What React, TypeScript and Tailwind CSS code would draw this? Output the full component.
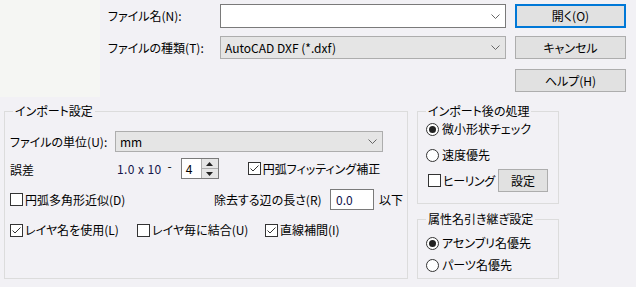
import React from "react";

const font =
  "font-['Noto_Sans_CJK_JP','Noto_Sans_CJK_SC',sans-serif] [font-feature-settings:'palt'] text-[12px] leading-[16px] text-black";

function CheckBox({ checked }: { checked?: boolean }) {
  return (
    <svg width="13" height="13" viewBox="0 0 13 13" className="shrink-0">
      <rect x="0.5" y="0.5" width="12" height="12" fill="#fff" stroke="#333" />
      {checked && (
        <path d="M2.5 6.5 L5 9 L10.5 3.5" fill="none" stroke="#333" strokeWidth="1" />
      )}
    </svg>
  );
}

function Radio({ on }: { on?: boolean }) {
  return (
    <svg width="13" height="13" viewBox="0 0 13 13" className="shrink-0">
      <circle cx="6.5" cy="6.5" r="6" fill="#fff" stroke="#333" />
      {on && <circle cx="6.5" cy="6.5" r="3.5" fill="#222" />}
    </svg>
  );
}

function Chevron() {
  return (
    <svg width="9" height="5" viewBox="0 0 9 5">
      <path d="M0.5 0.5 L4.5 4.5 L8.5 0.5" fill="none" stroke="#666" />
    </svg>
  );
}

function Button({ label, primary }: { label: string; primary?: boolean }) {
  return (
    <div
      className={`flex items-center justify-center bg-[#e1e1e1] ${
        primary ? "border-2 border-[#0078d7]" : "border border-[#adadad]"
      } h-full w-full`}
    >
      {label}
    </div>
  );
}

function GroupBox({
  title,
  className,
  children,
}: {
  title: string;
  className: string;
  children: React.ReactNode;
}) {
  return (
    <div className={`relative border border-[#dcdcdc] ${className}`}>
      <span className="absolute left-[8px] top-[-9px] bg-[#f2f1f5] px-[2px] leading-[16px]">
        {title}
      </span>
      {children}
    </div>
  );
}

export default function App() {
  return (
    <div className={`w-[636px] h-[287px] bg-[#f2f1f5] overflow-hidden ${font}`}>
      {/* top: file selection */}
      <div className="flex h-[97px]">
        <div className="w-[100px] h-[97px] bg-[#f5f6f3]" />
        <div className="flex flex-col pl-[8px] pt-[4px]">
          <div className="flex items-center h-[24px]">
            <span className="w-[112px]">ファイル名(N):</span>
            <div className="w-[286px] h-[24px] bg-white border border-[#7a7a7a] flex items-center justify-end pr-[5px]">
              <Chevron />
            </div>
          </div>
          <div className="flex items-center h-[23px] mt-[8px]">
            <span className="w-[112px]">ファイルの種類(T):</span>
            <div className="w-[286px] h-[23px] bg-[#e5e5e5] border border-[#adadad] flex items-center justify-between pl-[4px] pr-[5px]">
              <span>AutoCAD DXF (*.dxf)</span>
              <Chevron />
            </div>
          </div>
        </div>
        <div className="flex flex-col ml-[9px] pt-[4px] w-[111px]">
          <div className="h-[24px]">
            <Button label="開く(O)" primary />
          </div>
          <div className="h-[23px] mt-[8px]">
            <Button label="キャンセル" />
          </div>
          <div className="h-[23px] mt-[10px]">
            <Button label="ヘルプ(H)" />
          </div>
        </div>
      </div>

      {/* bottom: settings */}
      <div className="flex pl-[4px] mt-[14px]">
        <GroupBox title="インポート設定" className="w-[404px] h-[168px]">
          <div className="flex flex-col pl-[5px] pt-[19px]">
            <div className="flex items-center h-[21px]">
              <span className="w-[105px]">ファイルの単位(U):</span>
              <div className="w-[268px] h-[21px] bg-[#e5e5e5] border border-[#adadad] flex items-center justify-between pl-[4px] pr-[5px]">
                <span>mm</span>
                <Chevron />
              </div>
            </div>

            <div className="flex items-center h-[21px] mt-[6px]">
              <span className="w-[107px] pt-[3px]">誤差</span>
              <span className="text-[#14144a] tracking-[0.4px]">1.0 x 10</span>
              <span className="ml-[6px] mr-[9px] -mt-[6px]">-</span>
              <div className="flex w-[38px] h-[21px] bg-white border border-[#7a7a7a]">
                <span className="flex-1 pl-[4px] leading-[19px]">4</span>
                <div className="flex flex-col w-[17px] border-l border-[#adadad]">
                  <div className="flex-1 bg-[#e5e5e5] border-b border-[#adadad] flex items-center justify-center">
                    <svg width="7" height="4" viewBox="0 0 7 4">
                      <path d="M0 4 L3.5 0 L7 4 Z" fill="#222" />
                    </svg>
                  </div>
                  <div className="flex-1 bg-[#e5e5e5] flex items-center justify-center">
                    <svg width="7" height="4" viewBox="0 0 7 4">
                      <path d="M0 0 L3.5 4 L7 0 Z" fill="#222" />
                    </svg>
                  </div>
                </div>
              </div>
              <div className="flex items-center gap-[2px] ml-[29px]">
                <CheckBox checked />
                <span>円弧フィッティング補正</span>
              </div>
            </div>

            <div className="flex items-center h-[21px] mt-[10px]">
              <div className="flex items-center gap-[2px] w-[204px]">
                <CheckBox />
                <span>円弧多角形近似(D)</span>
              </div>
              <span className="w-[116px]">除去する辺の長さ(R)</span>
              <div className="w-[44px] h-[21px] bg-white border border-[#7a7a7a] pl-[5px] leading-[19px] text-[#10104a]">
                0.0
              </div>
              <span className="ml-[5px]">以下</span>
            </div>

            <div className="flex items-center h-[16px] mt-[12px]">
              <div className="flex items-center gap-[2px] w-[127px]">
                <CheckBox checked />
                <span>レイヤ名を使用(L)</span>
              </div>
              <div className="flex items-center gap-[2px] w-[128px]">
                <CheckBox />
                <span>レイヤ毎に結合(U)</span>
              </div>
              <div className="flex items-center gap-[2px]">
                <CheckBox checked />
                <span>直線補間(I)</span>
              </div>
            </div>
          </div>
        </GroupBox>

        <div className="flex flex-col ml-[9px] w-[142px]">
          <GroupBox title="インポート後の処理" className="h-[93px]">
            <div className="flex flex-col pl-[8px] pt-[9px]">
              <div className="flex items-center gap-[3px] h-[16px]">
                <Radio on />
                <span>微小形状チェック</span>
              </div>
              <div className="flex items-center gap-[3px] h-[16px] mt-[10px]">
                <Radio />
                <span>速度優先</span>
              </div>
              <div className="flex items-center h-[23px] mt-[6px]">
                <div className="flex items-center gap-[2px] w-[70px] ml-[2px]">
                  <CheckBox />
                  <span className="tracking-[-0.5px]">ヒーリング</span>
                </div>
                <div className="w-[50px] h-[23px]">
                  <Button label="設定" />
                </div>
              </div>
            </div>
          </GroupBox>
          <GroupBox title="属性名引き継ぎ設定" className="h-[60px] mt-[15px]">
            <div className="flex flex-col pl-[8px] pt-[15px]">
              <div className="flex items-center gap-[3px] h-[16px]">
                <Radio on />
                <span>アセンブリ名優先</span>
              </div>
              <div className="flex items-center gap-[3px] h-[16px] mt-[6px]">
                <Radio />
                <span>パーツ名優先</span>
              </div>
            </div>
          </GroupBox>
        </div>
      </div>
    </div>
  );
}
